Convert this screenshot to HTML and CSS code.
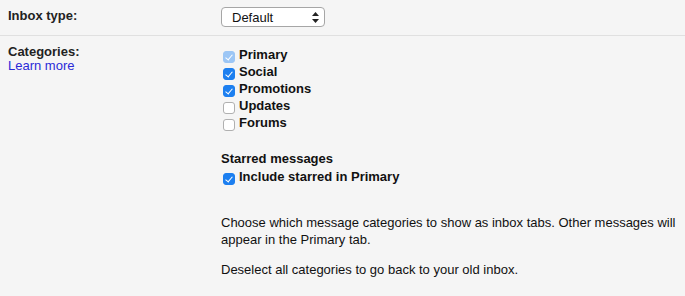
FILE: index.html
```html
<!DOCTYPE html>
<html lang="en">
<head>
    <meta charset="UTF-8">
    <title>Inbox settings</title>
    <link rel="stylesheet" href="styles.css">
</head>
<body>
    <div class="settings">
        <div class="row row-top">
            <div class="label">Inbox type:</div>
            <div class="value">
                <div class="select">
                    <span>Default</span>
                    <svg class="arrows" width="7" height="11" viewBox="0 0 7 11"><path d="M3.5 0 L7 4 H0 Z M3.5 11 L7 7 H0 Z" fill="#222"/></svg>
                </div>
            </div>
        </div>
        <div class="row">
            <div class="label">
                Categories:
                <a class="learn" href="#">Learn more</a>
            </div>
            <div class="value">
                <ul class="checks">
                    <li><span class="box on disabled"></span>Primary</li>
                    <li><span class="box on"></span>Social</li>
                    <li><span class="box on"></span>Promotions</li>
                    <li><span class="box"></span>Updates</li>
                    <li><span class="box"></span>Forums</li>
                </ul>
                <div class="starred">
                    <div class="sub-title">Starred messages</div>
                    <ul class="checks">
                        <li><span class="box on"></span>Include starred in Primary</li>
                    </ul>
                </div>
                <p class="help">Choose which message categories to show as inbox tabs. Other messages will appear in the Primary tab.</p>
                <p class="help">Deselect all categories to go back to your old inbox.</p>
            </div>
        </div>
    </div>
</body>
</html>
```

FILE: styles.css
```css
body {
    margin: 0;
    background-color: #f5f5f5;
    font-family: 'Liberation Sans', Arial, sans-serif;
    font-size: 13px;
    line-height: 15px;
    color: #222;
}
.settings {
    width: 685px;
}
.row {
    display: flex;
    padding: 0 8px;
}
.row-top {
    height: 36px;
    align-items: flex-start;
    padding-top: 7px;
    box-sizing: border-box;
    border-bottom: 1px solid #e0e0e0;
}
.label {
    width: 213px;
    font-weight: bold;
}
.row-top .label {
    padding-top: 1px;
}
.row:not(.row-top) .label {
    padding-top: 8px;
}
.learn {
    display: block;
    font-weight: normal;
    color: #2a2ad8;
    text-decoration: none;
    margin-top: -1px;
}
.value {
    flex: 1;
}
.select {
    height: 18px;
    border: 1px solid #a6a6a6;
    border-radius: 4px;
    background-color: #fff;
    display: flex;
    align-items: center;
    justify-content: space-between;
    padding: 0 5px 0 10px;
    width: 87px;
    font-size: 13px;
    color: #111;
}
.checks {
    list-style: none;
    margin: 0;
    padding: 0;
    font-weight: bold;
    color: #111;
}
.row:not(.row-top) > .value > .checks {
    margin-top: 10px;
}
.checks li {
    display: flex;
    align-items: center;
    height: 17px;
    margin-left: 2px;
}
.box {
    align-self: flex-start;
    width: 10px;
    height: 10px;
    border: 1px solid #b0b0b0;
    border-radius: 3px;
    background-color: #fff;
    margin-right: 4px;
    margin-top: 5px;
    position: relative;
    flex-shrink: 0;
}
.box.on {
    background-color: #1c7ff0;
    border-color: #1c7ff0;
}
.box.on::after {
    content: "";
    position: absolute;
    left: 3px;
    top: 1px;
    width: 3px;
    height: 6px;
    border: solid #fff;
    border-width: 0 1.5px 1.5px 0;
    transform: rotate(40deg);
}
.box.disabled {
    background-color: #9cc6f5;
    border-color: #9cc6f5;
}
.starred {
    margin-top: 20px;
}
.sub-title {
    font-weight: bold;
    color: #111;
    margin-bottom: 2px;
}
.help {
    margin: 0;
    line-height: 17px;
    color: #111;
}
.starred + .help {
    margin-top: 29px;
}
.help + .help {
    margin-top: 13px;
}
```
